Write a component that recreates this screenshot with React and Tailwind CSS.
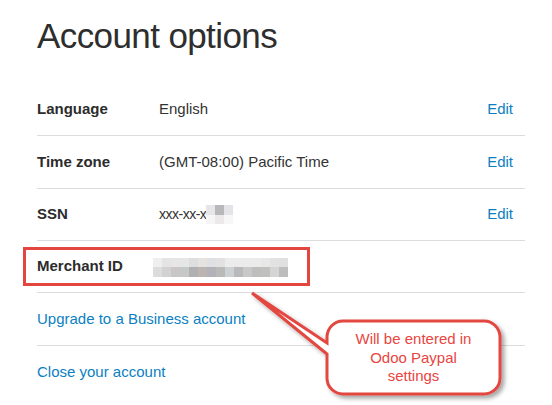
import React from 'react'

const ssnBlur = [
  ['#e6e6e8', '#b8b8ba', '#e3e3e8'],
  ['#f5f6f5', '#ebe9ea', '#f7f7f7'],
]

const merchantBlur = [
  ['#efefef', '#e4e4e4', '#e7e5e5', '#e5e7e7', '#dededf', '#e6e2df', '#dfe0e4', '#e3e2e0', '#ececec', '#ebebeb', '#ebebeb', '#ebebeb', '#e8e8e8', '#e2e2e2', '#e0e0e0'],
  ['#dcdcdc', '#d2d2d2', '#c8c6c6', '#c6c8c8', '#b0b0b2', '#bcb4b0', '#b2b2b8', '#babab8', '#cdd1d4', '#b9b9b9', '#c8c8c6', '#bebebe', '#c0c0bf', '#d5d5d5', '#bdbdbd'],
]

// pixelated mosaic used to hide private values
function Mosaic({ rows }) {
  return (
    <span className="inline-flex flex-col align-middle">
      {rows.map((row, i) => (
        <span key={i} className="flex">
          {row.map((c, j) => (
            <span key={j} className="block w-[9px] h-[9.5px]" style={{ background: c }} />
          ))}
        </span>
      ))}
    </span>
  )
}

function Row({ label, children, edit, h = 'h-[53px]', extra }) {
  return (
    <div className={`relative flex items-center ${h} pr-[12px] border-b border-[#dcdcdc]`}>
      <div className="w-[122px] font-bold text-[15px] text-[#2c2c2c]">{label}</div>
      <div className="flex-1 flex items-center text-[15px] text-[#333]">{children}</div>
      {edit && <a className="text-[15px] text-[#0b7fc2]">Edit</a>}
      {extra}
    </div>
  )
}

export default function App() {
  return (
    <div className="relative w-[552px] h-[405px] bg-white overflow-hidden" style={{ fontFamily: '"Liberation Sans", Arial, sans-serif' }}>
      <div className="pl-[37px] pr-[27px] pt-[16px]">
        <h1 className="text-[35px] leading-[40px] tracking-[-0.6px] text-[#2e2e2e] font-normal mb-[27px]">Account options</h1>

        <Row label="Language" edit>English</Row>
        <Row label="Time zone" edit>(GMT-08:00) Pacific Time</Row>
        <Row label="SSN" edit h="h-[52px]">
          <span className="text-[14px] tracking-[-0.5px]">xxx-xx-x</span>
          <Mosaic rows={ssnBlur} />
        </Row>
        <Row
          label="Merchant ID"
          h="h-[52px]"
          extra={<div className="absolute left-[-14px] top-[6px] w-[287px] h-[39px] border-[3px] border-[#e2463f]" />}
        >
          <span className="-ml-[6px]"><Mosaic rows={merchantBlur} /></span>
        </Row>
        <div className="flex items-center h-[53px] border-b border-[#dcdcdc]">
          <a className="text-[15px] text-[#0b7fc2]">Upgrade to a Business account</a>
        </div>
        <div className="flex items-center h-[52px]">
          <a className="text-[15px] text-[#0b7fc2]">Close your account</a>
        </div>
      </div>

      {/* callout annotation */}
      <svg className="absolute left-0 top-0" width="552" height="405" viewBox="0 0 552 405">
        <defs>
          <filter id="sh" x="-20%" y="-20%" width="140%" height="140%">
            <feDropShadow dx="3" dy="3" stdDeviation="2" floodColor="#000" floodOpacity="0.35" />
          </filter>
        </defs>
        <path
          d="M343 321 H484 A16 16 0 0 1 500 337 V378 A16 16 0 0 1 484 394 H343 A16 16 0 0 1 327 378 V354 L252 293 L327 343 V337 A16 16 0 0 1 343 321 Z"
          fill="#fff"
          stroke="#e2463f"
          strokeWidth="3"
          strokeLinejoin="miter"
          filter="url(#sh)"
        />
      </svg>
      <div className="absolute left-[327px] top-[330px] w-[173px] text-center text-[15px] leading-[18.5px] text-[#e8453f]">
        Will be entered in<br />Odoo Paypal<br />settings
      </div>
    </div>
  )
}
